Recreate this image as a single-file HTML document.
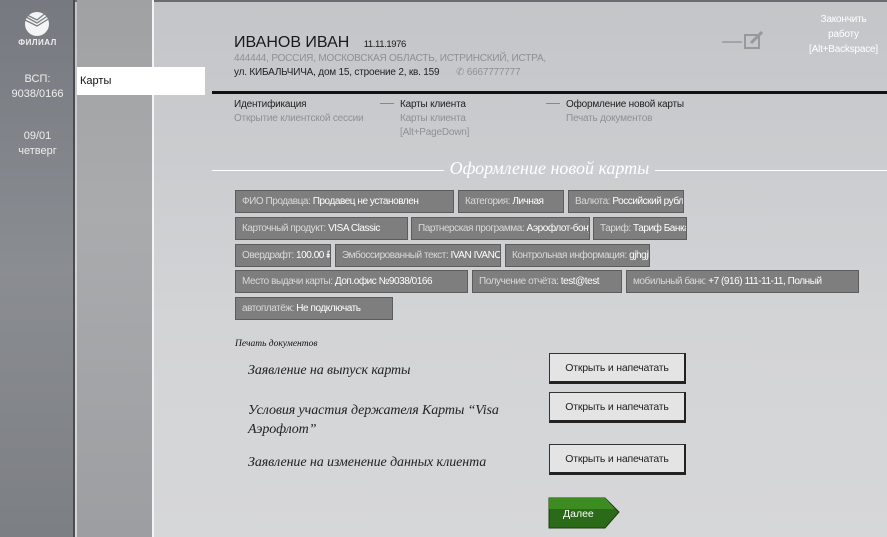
<!DOCTYPE html>
<html><head><meta charset="utf-8"><style>
*{margin:0;padding:0;box-sizing:border-box}
body{width:887px;height:537px;overflow:hidden;position:relative;font-family:"Liberation Sans","Noto Sans CJK SC",sans-serif;background:linear-gradient(#c3c5c8,#d3d4d6 60%,#d6d7d8)}
.abs{position:absolute}
#s1{left:0;top:0;width:75px;height:537px;background:linear-gradient(#767a80,#8a8d92 50%,#7c7f84);border-right:2px solid #4a4c50;color:#eee;text-align:center;font-size:11px}
#s2{left:77px;top:0;width:77px;height:537px;background:linear-gradient(#9fa1a3,#a9abad 40%,#9c9ea1);border-right:2px solid #f4f4f4}
#top{left:0;top:0;width:887px;height:2px;background:#6a6c70}
.chip{position:absolute;height:23px;background:#7e7e7e;border:1px solid #5c5c5c;color:#d9d9d9;font-size:10px;letter-spacing:-0.45px;line-height:21px;padding:0 0 0 6px;white-space:nowrap;overflow:hidden}
.chip b{font-weight:normal;color:#fff}
.doc{position:absolute;left:248px;font-family:"Liberation Serif",serif;font-style:italic;font-size:14px;color:#222;line-height:19px;letter-spacing:-0.1px}
.btn{position:absolute;left:549px;width:137px;height:31px;background:#e4e4e4;border:1px solid #333;border-bottom:3px solid #222;border-right:2px solid #222;font-size:10.5px;letter-spacing:-0.2px;color:#222;text-align:center;line-height:29px}
.g{color:#8e9094}
.sm{font-size:10px;letter-spacing:-0.2px}
</style></head><body>
<div id="top" class="abs"></div>
<div id="s1" class="abs">
 <svg class="abs" style="left:23px;top:10px" width="28" height="26" viewBox="0 0 28 26"><circle cx="14" cy="14" r="12" fill="#f4f4f4"/><path d="M3 7 L14 13 L26 5 M2 10 L14 16 L27 8 M2 4 L14 10 L24 2" stroke="#7a7e84" stroke-width="1.3" fill="none"/></svg>
 <div class="abs" style="left:0;width:75px;top:38px;font-size:8px;font-weight:bold;letter-spacing:.5px">ФИЛИАЛ</div>
 <div class="abs" style="left:0;width:75px;top:72px;line-height:15px">ВСП:<br>9038/0166</div>
 <div class="abs" style="left:0;width:75px;top:129px;line-height:15px">09/01<br>четверг</div>
</div>
<div id="s2" class="abs"></div>
<div class="abs" style="left:77px;top:67px;width:128px;height:28px;background:#fff;font-size:11px;line-height:28px;padding-left:3px;color:#111">Карты</div>

<div class="abs" style="left:234px;top:34px;font-size:16px;color:#1a1a1a">ИВАНОВ ИВАН <span style="font-size:9.5px;margin-left:10px;letter-spacing:-0.4px">11.11.1976</span></div>
<div class="abs g sm" style="left:234px;top:53px">444444, РОССИЯ, МОСКОВСКАЯ ОБЛАСТЬ, ИСТРИНСКИЙ, ИСТРА,</div>
<div class="abs sm" style="left:234px;top:67px;color:#222">ул. КИБАЛЬЧИЧА, дом 15, строение 2, кв. 159 <span class="g" style="margin-left:14px">✆ 6667777777</span></div>
<svg class="abs" style="left:722px;top:30px" width="44" height="22"><line x1="0" y1="12" x2="20" y2="12" stroke="#999" stroke-width="1.5"/><rect x="23" y="5" width="14" height="13" fill="none" stroke="#999" stroke-width="2"/><path d="M29 13 L40 2" stroke="#999" stroke-width="3"/></svg>
<div class="abs sm" style="left:800px;top:12px;width:87px;text-align:center;color:#fff;line-height:15px">Закончить<br>работу<br>[Alt+Backspace]</div>
<div class="abs" style="left:212px;top:91px;width:675px;height:3px;background:#111"></div>

<div class="abs sm" style="left:234px;top:98px;line-height:14px;color:#222">Идентификация<br><span class="g">Открытие клиентской сессии</span></div>
<div class="abs" style="left:380px;top:103px;width:14px;height:1px;background:#888"></div>
<div class="abs sm" style="left:400px;top:98px;line-height:14px;color:#222">Карты клиента<br><span class="g">Карты клиента<br>[Alt+PageDown]</span></div>
<div class="abs" style="left:546px;top:103px;width:14px;height:1px;background:#888"></div>
<div class="abs sm" style="left:566px;top:98px;line-height:14px;color:#222">Оформление новой карты<br><span class="g">Печать документов</span></div>

<div class="abs" style="left:212px;top:170px;width:232px;height:1px;background:#fff"></div>
<div class="abs" style="left:655px;top:170px;width:232px;height:1px;background:#fff"></div>
<div class="abs" style="left:444px;top:158px;width:211px;text-align:center;color:#fff;font-family:'Liberation Serif',serif;font-style:italic;font-size:18px">Оформление новой карты</div>

<div class="chip" style="left:235px;top:190px;width:219px">ФИО Продавца: <b>Продавец не установлен</b></div>
<div class="chip" style="left:458px;top:190px;width:106px">Категория: <b>Личная</b></div>
<div class="chip" style="left:568px;top:190px;width:116px">Валюта: <b>Российский рубль</b></div>
<div class="chip" style="left:235px;top:217px;width:173px">Карточный продукт: <b>VISA Classic</b></div>
<div class="chip" style="left:411px;top:217px;width:179px">Партнерская программа: <b>Аэрофлот-бонус</b></div>
<div class="chip" style="left:593px;top:217px;width:94px">Тариф: <b>Тариф Банка</b></div>
<div class="chip" style="left:235px;top:244px;width:96px">Овердрафт: <b>100.00 ₽</b></div>
<div class="chip" style="left:335px;top:244px;width:166px">Эмбоссированный текст: <b>IVAN IVANOV</b></div>
<div class="chip" style="left:505px;top:244px;width:145px">Контрольная информация: <b>gjhgjh</b></div>
<div class="chip" style="left:235px;top:270px;width:233px">Место выдачи карты: <b>Доп.офис №9038/0166</b></div>
<div class="chip" style="left:472px;top:270px;width:150px">Получение отчёта: <b>test@test</b></div>
<div class="chip" style="left:626px;top:270px;width:233px">мобильный банк: <b>+7 (916) 111-11-11, Полный</b></div>
<div class="chip" style="left:235px;top:297px;width:158px">автоплатёж: <b>Не подключать</b></div>

<div class="abs" style="left:235px;top:339px;font-family:'Liberation Serif',serif;font-style:italic;font-size:9.5px;color:#111">Печать документов</div>
<div class="doc" style="top:361px">Заявление на выпуск карты</div>
<div class="doc" style="top:401px">Условия участия держателя Карты “Visa<br>Аэрофлот”</div>
<div class="doc" style="top:453px">Заявление на изменение данных клиента</div>
<div class="btn" style="top:353px">Открыть и напечатать</div>
<div class="btn" style="top:392px">Открыть и напечатать</div>
<div class="btn" style="top:444px">Открыть и напечатать</div>
<svg class="abs" style="left:548px;top:497px" width="72" height="32"><path d="M1 1 H57 L71 15 L57 31 H1 Z" fill="#2a6a18" stroke="#1c3c10"/><path d="M1 1 H57 L67 12 H1 Z" fill="#3d8c22"/><text x="15" y="20" fill="#fff" font-size="10.5" font-family="Liberation Sans">Далее</text></svg>
</body></html>
